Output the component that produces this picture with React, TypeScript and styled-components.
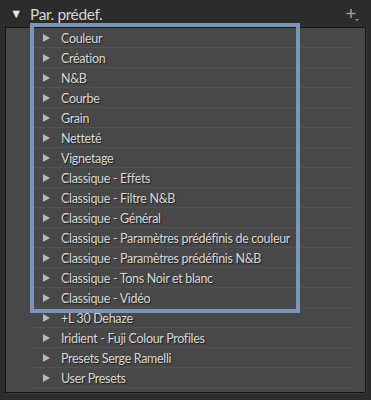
import React from 'react';
import styled, { createGlobalStyle } from 'styled-components';

const GlobalStyle = createGlobalStyle`
  html, body { margin: 0; padding: 0; background: #2c2c2c; }
  body { font-family: Lato, "Open Sans", sans-serif; }
`;

const presets = [
  'Couleur',
  'Création',
  'N&B',
  'Courbe',
  'Grain',
  'Netteté',
  'Vignetage',
  'Classique - Effets',
  'Classique - Filtre N&B',
  'Classique - Général',
  'Classique - Paramètres prédéfinis de couleur',
  'Classique - Paramètres prédéfinis N&B',
  'Classique - Tons Noir et blanc',
  'Classique - Vidéo',
  '+L 30 Dehaze',
  'Iridient - Fuji Colour Profiles',
  'Presets Serge Ramelli',
  'User Presets',
];

const Panel = () => {
  return (
    <Wrapper>
      <Header>
        <Title>
          <DownArrow>▼</DownArrow>
          Par. prédef.
        </Title>
        <AddButton>
          <svg width="14" height="14" viewBox="0 0 14 14">
            <path d="M5 1v9M0.5 5.5h9" stroke="#9a9a9a" strokeWidth="1.6" />
            <path d="M9 11h4l-2 2z" fill="#9a9a9a" />
          </svg>
        </AddButton>
      </Header>
      <ListBox>
        {presets.map((name) => (
          <Row key={name}>
            <RightArrow />
            <Label>{name}</Label>
          </Row>
        ))}
        <Highlight />
      </ListBox>
    </Wrapper>
  );
};

const Wrapper = styled.div`
  width: 371px;
  height: 400px;
  background: #2c2c2c;
  box-sizing: border-box;
  padding: 0 5px 7px 5px;
  display: flex;
  flex-direction: column;
`;

const Header = styled.div`
  height: 27px;
  display: flex;
  align-items: center;
  justify-content: space-between;
  padding: 0 6px 0 5px;
`;

const Title = styled.div`
  display: flex;
  align-items: center;
  gap: 8px;
  color: #d6d6d6;
  font-size: 15.5px;
  letter-spacing: -0.4px;
`;

const DownArrow = styled.span`
  font-size: 12.5px;
  color: #e8e8e8;
`;

const AddButton = styled.div`
  display: flex;
  margin-top: 2px;
`;

const ListBox = styled.div`
  position: relative;
  flex: 1;
  background: #484848;
  border: 1px solid #151515;
  box-shadow: 1px 1px 0 #3a3a3a;
`;

const Row = styled.div`
  height: 20px;
  display: flex;
  align-items: center;
  margin: 0 10px 0 24px;
  padding-top: 1px;
  border-bottom: 1px solid #525252;
  box-sizing: border-box;
`;

const RightArrow = styled.span`
  width: 0;
  height: 0;
  margin-left: 13px;
  border-top: 4px solid transparent;
  border-bottom: 4px solid transparent;
  border-left: 7px solid #b8b8b8;
`;

const Label = styled.span`
  margin-left: 11px;
  color: #d8d8d8;
  font-size: 12.5px;
  letter-spacing: -0.32px;
  text-shadow: 1px 1px 1px #1e1e1e;
  white-space: nowrap;
`;

const Highlight = styled.div`
  position: absolute;
  left: 24px;
  top: -5px;
  width: 262px;
  height: 282px;
  border: 4px solid #7a96b9;
  pointer-events: none;
`;

export default function App() {
  return (
    <>
      <GlobalStyle />
      <Panel />
    </>
  );
}
